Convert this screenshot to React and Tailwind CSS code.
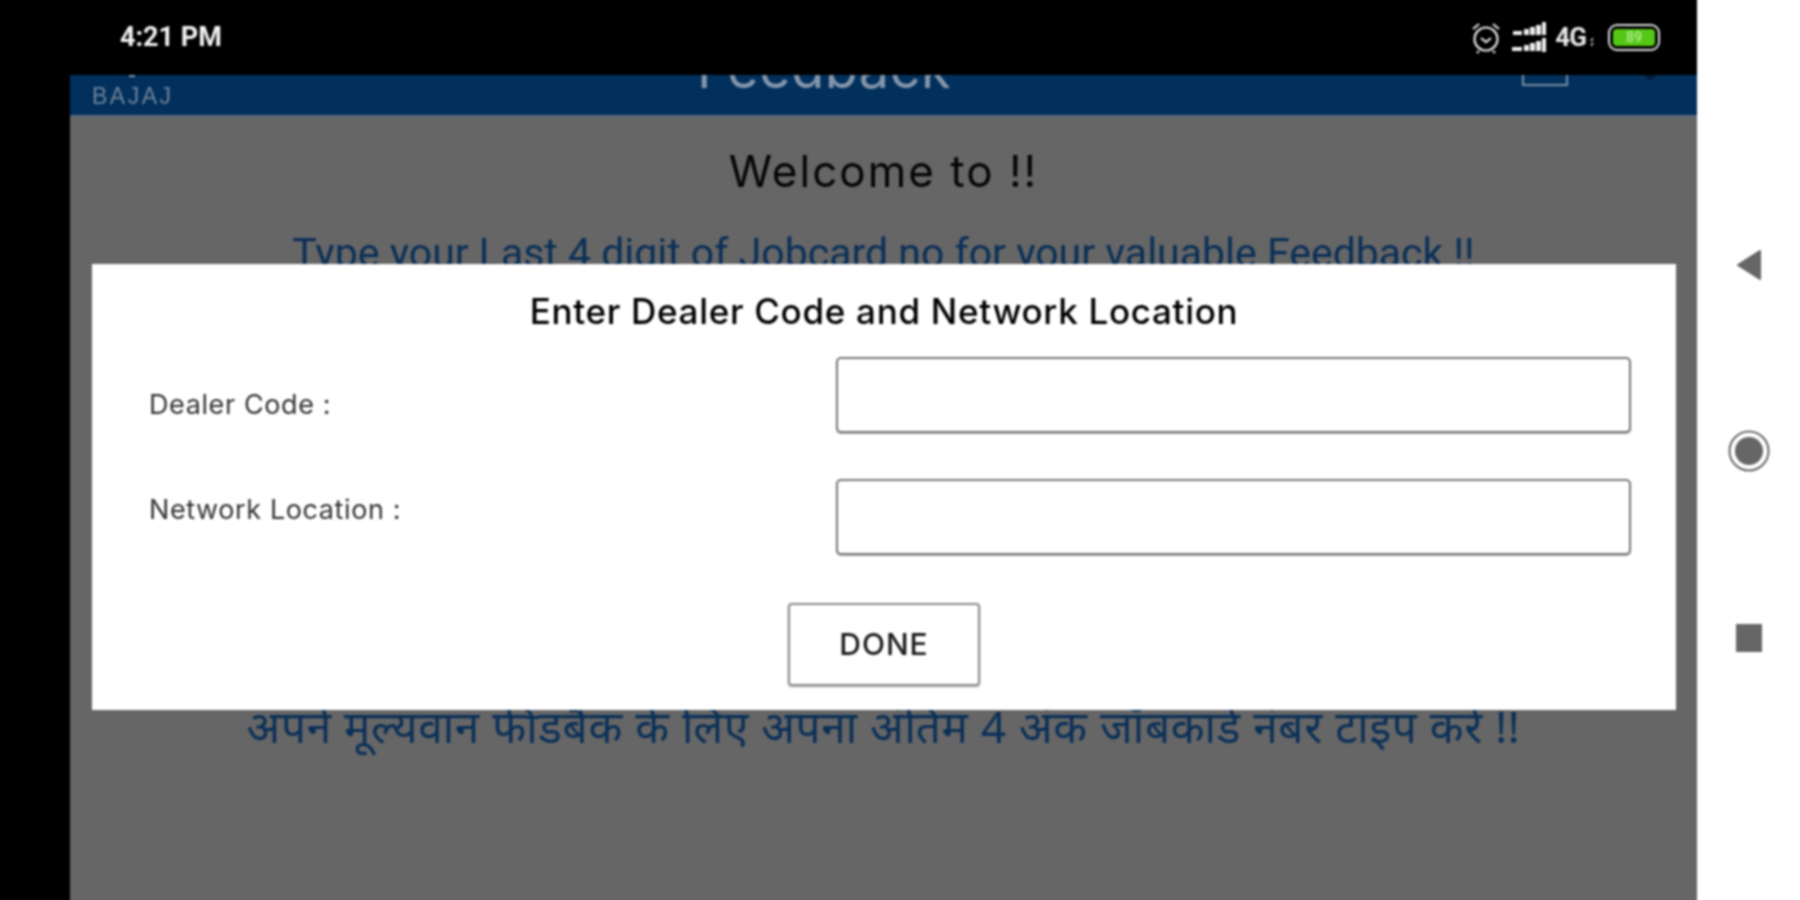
const sans = "font-['Inter','Noto_Sans',sans-serif]";

function StatusIcons() {
  return (
    <div className="flex items-center">
      {/* alarm */}
      <svg width="32" height="34" viewBox="0 0 32 34" fill="none" stroke="#e0e0e0" strokeWidth="2.2" className="mr-[10px]">
        <circle cx="16" cy="19" r="11.5" />
        <path d="M11 18l5 4 5-4" />
        <path d="M3 9l6-5M29 9l-6-5M9 31l-2 2M23 31l2 2" />
      </svg>
      {/* signal, two rows */}
      <svg width="34" height="30" viewBox="0 0 34 30" fill="#eeeeee" className="mr-[9px]">
        <rect x="1" y="9" width="9" height="4" />
        <rect x="12" y="7" width="5" height="6" />
        <rect x="18" y="5" width="5" height="8" />
        <rect x="24" y="3" width="5" height="10" />
        <rect x="30" y="0" width="4" height="13" />
        <rect x="0" y="25" width="10" height="4" />
        <rect x="12" y="23" width="5" height="6" />
        <rect x="18" y="21" width="5" height="8" />
        <rect x="24" y="19" width="5" height="10" />
        <rect x="30" y="16" width="4" height="14" />
      </svg>
      <span className="font-['Roboto',sans-serif] font-bold text-[26px] leading-none text-[#e8e8e8] tracking-[-1px]">4G</span>
      <svg width="8" height="12" viewBox="0 0 8 12" fill="#bbbbbb" className="mt-[10px] ml-[2px] mr-[12px]">
        <path d="M2 5l3-4v4zM3 7h3l-3 4z" />
      </svg>
      {/* battery */}
      <div className="flex items-center justify-center w-[52px] h-[27px] rounded-[9px] border-2 border-[#dddddd] p-[3px]">
        <div className="flex flex-1 h-full items-center justify-center rounded-[4px] bg-[#55c815] font-['Roboto',sans-serif] font-bold text-[14px] leading-none text-[#a8e88a]">
          89
        </div>
      </div>
    </div>
  );
}

function Field({ label, labelClass }) {
  return (
    <div className="flex items-center">
      <label className={`w-[687px] text-[27px] leading-[36px] tracking-[0.6px] text-[#333333] ${sans} ${labelClass}`}>{label}</label>
      <input className="flex-1 h-[76px] rounded-[5px] border-2 border-[#777777] bg-white shadow-[0_1px_1px_#aaaaaa]" />
    </div>
  );
}

export default function App() {
  return (
    <div className="w-[1800px] h-[900px] overflow-hidden">
      {/* 4px bleed on the outer edges so the soft focus doesn't fade at the page border */}
      <div className="flex w-[1808px] h-[908px] -ml-[4px] -mt-[4px] bg-white blur-[1px]">
        <div className="flex flex-col w-[1701px] pl-[4px] pt-[4px] bg-black">
          {/* status bar */}
          <div className="flex h-[75px] items-center justify-between pl-[120px] pr-[37px] pb-[1px]">
            <span className="font-['Roboto',sans-serif] font-bold text-[27px] text-[#f2f2f2]">4:21 PM</span>
            <StatusIcons />
          </div>

          <div className="flex flex-1 pl-[70px]">
            <div className="relative flex flex-col flex-1 bg-[#666666]">
              {/* header, cut off by the status bar */}
              <div className="relative h-[42px] overflow-hidden bg-[#02305c] border-b-2 border-[#5a6878]">
                <div className="absolute left-[59px] top-0 w-[6px] h-[2px] bg-[#8496aa]" />
                <div className="absolute left-[22px] top-[9px] font-['Liberation_Sans',sans-serif] text-[23px] leading-[24px] tracking-[2.5px] text-[#6f8298]">
                  BAJAJ
                </div>
                <div className={`absolute left-[627px] -top-[36px] text-[54px] leading-[60px] tracking-[0.5px] text-[#8496aa] ${sans}`}>
                  Feedback
                </div>
                <div className="absolute left-[1452px] -top-[20px] w-[46px] h-[31px] border-2 border-[#7a8ea3]" />
                <svg width="14" height="6" viewBox="0 0 14 6" fill="#011f3d" className="absolute left-[1573px] top-0">
                  <path d="M0 0h14L7 6z" />
                </svg>
              </div>

              {/* page behind the dialog */}
              <div className="flex flex-col items-center flex-1 pt-[24px]">
                <h1 className={`text-[44px] leading-[60px] tracking-[2px] text-[#050505] ${sans}`}>Welcome to !!</h1>
                <p className="mt-[30px] font-['Roboto',sans-serif] text-[41px] leading-[44px] text-[#0a2f57]">
                  Type your Last 4 digit of Jobcard no for your valuable Feedback !!
                </p>
                <p className="mt-[427px] font-['Noto_Sans','Noto_Sans_Devanagari','Liberation_Sans',sans-serif] text-[44px] leading-[48px] tracking-[0.75px] text-[#0a2f57]">
                  अपने मूल्यवान फीडबैक के लिए अपना अंतिम 4 अंक जॉबकार्ड नंबर टाइप करें !!
                </p>
              </div>

              {/* dialog */}
              <div className="absolute left-[22px] top-[189px] flex flex-col w-[1584px] h-[446px] bg-white pl-[57px] pr-[45px] pt-[25px]">
                <h2 className={`text-center -ml-[12px] text-[35px] leading-[44px] tracking-[0.7px] font-medium text-black ${sans}`}>
                  Enter Dealer Code and Network Location
                </h2>
                <div className="flex flex-col gap-[46px] mt-[24px]">
                  <Field label="Dealer Code :" labelClass="pt-[20px]" />
                  <Field label="Network Location :" labelClass="pb-[14px]" />
                </div>
                <div className="flex mt-[48px] pl-[639px]">
                  <button className={`w-[192px] h-[83px] rounded-[4px] border-2 border-[#8a8a8a] bg-white text-[30px] tracking-[1px] font-medium text-[#1a1a1a] shadow-[0_1px_2px_#aaaaaa] ${sans}`}>
                    DONE
                  </button>
                </div>
              </div>
            </div>
          </div>
        </div>

        {/* navigation bar */}
        <div className="flex flex-col items-center w-[107px] pr-[4px] pt-[253px]">
          <svg width="26" height="32" viewBox="0 0 26 32" fill="#666666" stroke="#666666" strokeWidth="2" strokeLinejoin="round">
            <path d="M24 2v28L2 16z" />
          </svg>
          <svg width="42" height="42" viewBox="0 0 42 42" className="mt-[149px]">
            <circle cx="21" cy="21" r="19.5" fill="none" stroke="#666666" strokeWidth="2" />
            <circle cx="21" cy="21" r="14" fill="#666666" />
          </svg>
          <div className="mt-[152px] w-[26px] h-[28px] bg-[#666666]" />
        </div>
      </div>
    </div>
  );
}
